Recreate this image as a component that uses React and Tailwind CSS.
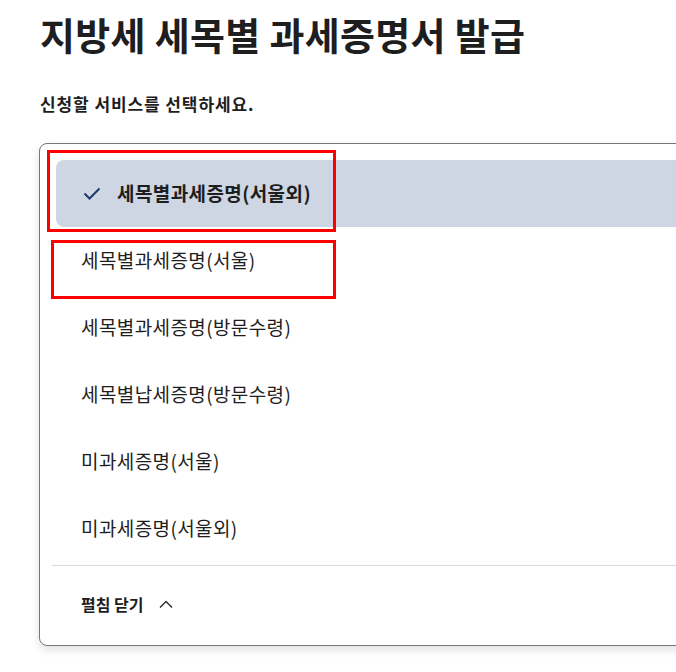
import React from "react";

const items = [
  "세목별과세증명(서울외)",
  "세목별과세증명(서울)",
  "세목별과세증명(방문수령)",
  "세목별납세증명(방문수령)",
  "미과세증명(서울)",
  "미과세증명(서울외)",
];

const font = { fontFamily: '"Noto Sans CJK KR", "Noto Sans", sans-serif' };

function Check() {
  return (
    <svg width="18" height="13" viewBox="0 0 18 13" fill="none">
      <path d="M1.5 6.5 L6.5 11.5 L16.5 1.5" stroke="#1d3a6b" strokeWidth="2" />
    </svg>
  );
}

function ChevronUp() {
  return (
    <svg width="14" height="8" viewBox="0 0 14 8" fill="none">
      <path d="M1 7.5 L7 1.5 L13 7.5" stroke="#333" strokeWidth="1.5" />
    </svg>
  );
}

export default function App() {
  const selected = 0;
  return (
    <div className="relative min-h-[672px] w-[676px] overflow-hidden bg-white text-[#1e1e1e]" style={font}>
      <div className="pl-10 pt-[7px]">
        <h1 className="text-[38px] font-bold leading-[54px] tracking-[0.3px]">지방세 세목별 과세증명서 발급</h1>
        <p className="mt-[31px] text-[17px] font-bold leading-[24px] tracking-[0.9px]">신청할 서비스를 선택하세요.</p>
      </div>

      <div className="ml-[39px] mt-[27px] w-[700px] rounded-l-[8px] border border-[#777] bg-white shadow-[0_4px_10px_rgba(0,0,0,0.12)]">
        <ul className="flex flex-col pl-4 pt-4">
          {items.map((t, i) => (
            <li
              key={t}
              className={`flex h-[67px] items-center rounded-l-[8px] ${
                i === selected ? "gap-[16px] bg-[#cdd6e2] pl-[27px] font-bold" : "pl-[25px]"
              } text-[19px] tracking-[0.4px]`}
            >
              {i === selected && <Check />}
              <span>{t}</span>
            </li>
          ))}
        </ul>
        <div className="ml-3 mt-[3px] border-t border-[#d9d9d9]">
          <button type="button" className="flex h-[79px] items-center gap-[15px] pl-[29px] pb-[3px] text-[16px] font-bold">
            펼침 닫기
            <ChevronUp />
          </button>
        </div>
      </div>

      <div className="pointer-events-none absolute left-[47px] top-[150px] h-[82px] w-[289px] border-[3px] border-[#ff0000]" />
      <div className="pointer-events-none absolute left-[51px] top-[240px] h-[59px] w-[285px] border-[3px] border-[#ff0000]" />
    </div>
  );
}
